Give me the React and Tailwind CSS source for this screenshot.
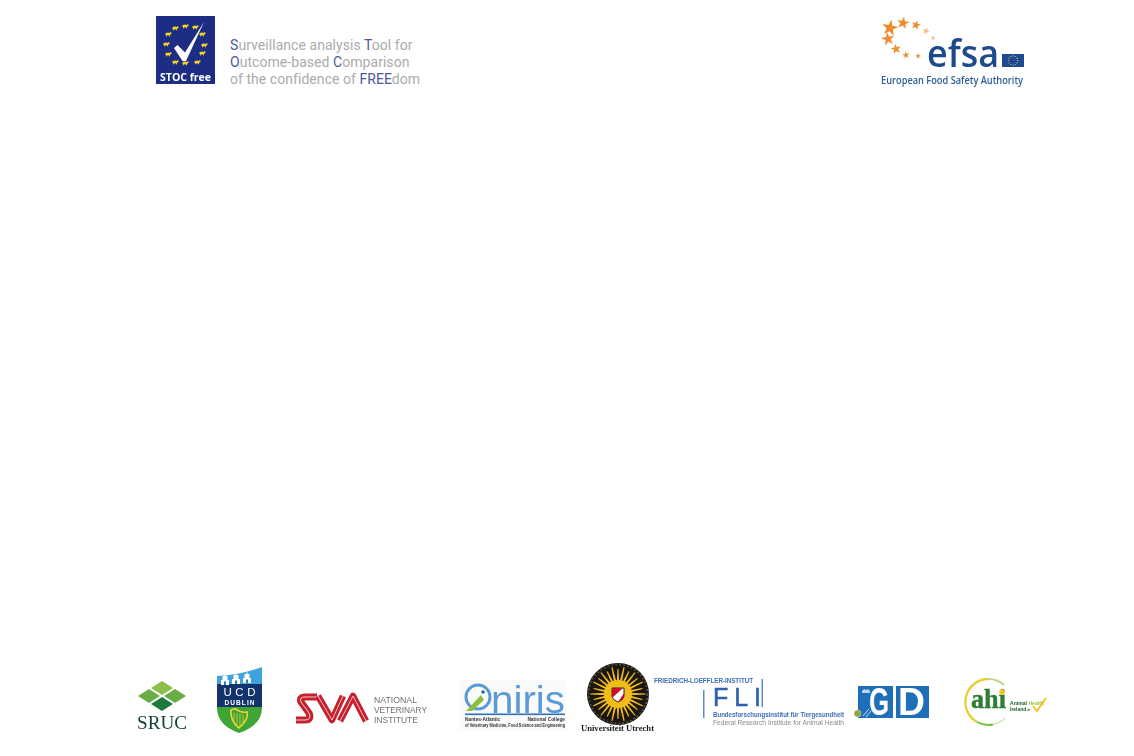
import React from "react";

const SANS = "'Open Sans', sans-serif";
const ARIAL = "'Liberation Sans', sans-serif";
const SERIF = "'Liberation Serif', serif";

function starPoints(cx, cy, r, rot = -90, inner = 0.4) {
  const pts = [];
  for (let i = 0; i < 10; i++) {
    const rad = i % 2 === 0 ? r : r * inner;
    const a = ((rot + i * 36) * Math.PI) / 180;
    pts.push(`${(cx + rad * Math.cos(a)).toFixed(2)},${(cy + rad * Math.sin(a)).toFixed(2)}`);
  }
  return pts.join(" ");
}

function StocFree() {
  const sheep = [[19,12],[29,10],[39,11],[46,18],[48,29],[46,37],[41,46],[29,47],[19,46],[12,38],[10,28],[12,18]];
  return (
    <svg width="59" height="68" viewBox="0 0 59 68" className="block shrink-0 overflow-visible blur-[0.3px]">
      <rect width="59" height="68" fill="#1c2d83" />
      {sheep.map(([x, y], i) => (
        <g key={i} fill="#f5d327">
          <ellipse cx={x} cy={y} rx="2.8" ry="1.5" />
          <rect x={x - 2} y={y} width="0.8" height="2.4" />
          <rect x={x + 1.2} y={y} width="0.8" height="2.4" />
          <circle cx={x + 2.7} cy={y - 0.8} r="0.9" />
        </g>
      ))}
      <polygon points="18,32 21.5,29 29,36.5 48,6 30,45 26.5,45" fill="#ffffff" />
      <text x="29.5" y="64.5" textAnchor="middle" fontFamily={SANS} fontWeight="700" fontSize="10.5" fill="#ffffff" textLength="51" lengthAdjust="spacingAndGlyphs">STOC free</text>
    </svg>
  );
}

function Efsa() {
  const stars = [[9,9,8.5,-80],[22,4,6.5,-80],[35,6,5,-75],[45,12,3.8,-70],[52,19,2.6,-70],[7,20,7,-100],[15,30,5.4,-100],[25,36,3.8,-100],[37,37,3,-100]];
  const ring = Array.from({ length: 12 }, (_, i) => {
    const a = (i * 30 * Math.PI) / 180;
    return [132 + 4.6 * Math.cos(a), 41.5 + 4.6 * Math.sin(a)];
  });
  return (
    <svg width="144" height="69" viewBox="0 0 144 69" className="block shrink-0 overflow-visible blur-[0.3px]">
      {stars.map(([x, y, r, rot], i) => (
        <polygon key={i} points={starPoints(x, y, r, rot)} fill={i < 3 ? "#ee8a2b" : i < 5 ? "#f3bd8c" : "#ee8f35"} />
      ))}
      <text x="46" y="48" fontFamily={SANS} fontWeight="600" fontSize="38" fill="#1d4a8c" textLength="72" lengthAdjust="spacingAndGlyphs">efsa</text>
      <rect x="121" y="35" width="22" height="13" fill="#1f4a92" />
      {ring.map(([x, y], i) => (
        <circle key={i} cx={x} cy={y} r="0.6" fill="#d8cf4a" />
      ))}
      <text x="0" y="65" fontFamily={SANS} fontWeight="600" fontSize="10" fill="#2e5c99" textLength="142" lengthAdjust="spacingAndGlyphs">European Food Safety Authority</text>
    </svg>
  );
}

function Sruc() {
  return (
    <svg width="50" height="50" viewBox="0 0 50 50" className="block shrink-0 overflow-visible ml-[137px] mt-[21px] blur-[0.3px]">
      <polygon points="25,0 36,7 25,14 14,7" fill="#8cbf4a" />
      <polygon points="12,8 23,15 12,22 1,15" fill="#6aad47" />
      <polygon points="38,8 49,15 38,22 27,15" fill="#6aad47" />
      <polygon points="25,16 36,23 25,30 14,23" fill="#1e7a3c" />
      <text x="0" y="48" fontFamily={SERIF} fontSize="19" fill="#12432f" textLength="50" lengthAdjust="spacingAndGlyphs">SRUC</text>
    </svg>
  );
}

function Ucd() {
  const shield = "M1 9 Q24 8 46 0 V41 Q46 58 23 66 Q1 58 1 41 Z";
  const towers = [[9, 9], [20, 8], [31, 7]];
  return (
    <svg width="47" height="67" viewBox="0 0 47 67" className="block shrink-0 overflow-visible ml-[29px] mt-[7px] blur-[0.3px]">
      <defs>
        <clipPath id="ucdShield"><path d={shield} /></clipPath>
      </defs>
      <g clipPath="url(#ucdShield)">
        <rect width="47" height="18" fill="#3ea3dc" />
        <rect y="17" width="47" height="23" fill="#14326b" />
        <rect y="40" width="47" height="27" fill="#3fa535" />
      </g>
      {towers.map(([x, y]) => (
        <g key={x} fill="#ffffff">
          <rect x={x - 4} y={y + 4} width="8" height="5" />
          <rect x={x - 2.5} y={y} width="5" height="4" />
          <polygon points={`${x - 1},${y} ${x},${y - 2} ${x + 1},${y}`} />
          <rect x={x - 1} y={y + 5.5} width="2" height="3.5" fill="#2a7ab8" />
        </g>
      ))}
      <text x="23.5" y="29" textAnchor="middle" fontFamily={ARIAL} fontSize="11.5" fill="#ffffff" textLength="32" lengthAdjust="spacing">UCD</text>
      <text x="23.5" y="38" textAnchor="middle" fontFamily={ARIAL} fontWeight="700" fontSize="6.5" fill="#ffffff" textLength="30" lengthAdjust="spacing">DUBLIN</text>
      <g fill="none" stroke="#f3d23c">
        <path d="M15 43 Q14 54 23 61 Q33 52 31 45 Q24 46 20 42 Q16 42 15 43 Z" strokeWidth="1.6" />
        <path d="M18 46 V55 M21 46 V58 M24 47 V59 M27 47 V56" strokeWidth="0.7" />
      </g>
    </svg>
  );
}

function Sva() {
  const s = "M22 4 H10 Q4 4 6 9 L14 20 Q17 27 10 27 H1";
  const v = "M23 3 L37 27 L48 3";
  const a = "M45 28 L58 3 L71 28";
  return (
    <svg width="132" height="32" viewBox="0 0 132 32" className="block shrink-0 overflow-visible ml-[32px] mt-[33px] blur-[0.3px]">
      <g fill="none" strokeLinejoin="round">
        <path d={s} stroke="#c4202e" strokeWidth="7" />
        <path d={s} stroke="#ffffff" strokeWidth="0.8" />
        <path d={v} stroke="#c4202e" strokeWidth="6.5" />
        <path d={v} stroke="#ffffff" strokeWidth="0.7" />
        <path d={a} stroke="#c4202e" strokeWidth="6.5" />
        <path d={a} stroke="#ffffff" strokeWidth="0.7" />
      </g>
      <g fontFamily={ARIAL} fontSize="9.5" fill="#6f7073">
        <text x="79" y="10" textLength="43" lengthAdjust="spacingAndGlyphs">NATIONAL</text>
        <text x="79" y="20" textLength="53" lengthAdjust="spacingAndGlyphs">VETERINARY</text>
        <text x="79" y="30" textLength="44" lengthAdjust="spacingAndGlyphs">INSTITUTE</text>
      </g>
    </svg>
  );
}

function Oniris() {
  return (
    <svg width="106" height="50" viewBox="0 0 106 50" className="block shrink-0 overflow-visible ml-[33px] mt-[20px] blur-[0.3px]">
      <rect width="106" height="50" fill="#fafafa" />
      <circle cx="18" cy="17" r="12" fill="none" stroke="#5b9bd5" strokeWidth="3" />
      <circle cx="23" cy="12" r="1.7" fill="#1f5fa8" />
      <polygon points="6,31 21,15 24,20 12,31" fill="#8dbf3f" />
      <text x="31" y="33" fontFamily={ARIAL} fontSize="38" fill="#5b9bd5" textLength="74" lengthAdjust="spacingAndGlyphs">niris</text>
      <rect x="5" y="33.5" width="100" height="1.6" fill="#2f6fb3" />
      <text x="5" y="40.5" fontFamily={ARIAL} fontWeight="700" fontSize="4.8" fill="#333333">Nantes-Atlantic</text>
      <text x="105" y="40.5" textAnchor="end" fontFamily={ARIAL} fontWeight="700" fontSize="4.8" fill="#333333">National College</text>
      <text x="5" y="46.5" fontFamily={ARIAL} fontWeight="700" fontSize="4.8" fill="#333333" textLength="100" lengthAdjust="spacingAndGlyphs">of Veterinary Medicine, Food Science and Engineering</text>
    </svg>
  );
}

function Utrecht() {
  const cx = 37;
  const cy = 34;
  const rays = Array.from({ length: 28 }, (_, i) => {
    const a = (i * (360 / 28) * Math.PI) / 180;
    const d = 0.11;
    const tip = 0.02;
    const out = i % 2 ? 25 : 27.5;
    const p = (r, t) => `${(cx + r * Math.cos(t)).toFixed(2)},${(cy + r * Math.sin(t)).toFixed(2)}`;
    return `${p(11, a - d)} ${p(out, a - tip)} ${p(out, a + tip)} ${p(11, a + d)}`;
  });
  return (
    <svg width="74" height="73" viewBox="0 0 74 73" className="block shrink-0 overflow-visible ml-[15px] blur-[0.3px]">
      <circle cx={cx} cy={cy} r="31" fill="#1a1712" />
      <circle cx={cx} cy={cy} r="14" fill="#f2bd1b" />
      {rays.map((r, i) => (
        <polygon key={i} points={r} fill="#f2bd1b" />
      ))}
      <circle cx={cx} cy={cy} r="29.5" fill="none" stroke="#4f4a3c" strokeWidth="2" strokeDasharray="2 2" />
      <path d="M31 28 H43 V36 Q43 40 37 42 Q31 40 31 36 Z" fill="#ffffff" stroke="#1a1712" strokeWidth="0.9" />
      <path d="M31 28 H42 L31 38 Z" fill="#c8102e" />
      <path d="M43 33 V36 Q43 40 37 42 Z" fill="#c8102e" />
      <text x="0" y="71" fontFamily={SERIF} fontWeight="700" fontSize="8.4" fill="#1a1a1a" textLength="73" lengthAdjust="spacingAndGlyphs">Universiteit Utrecht</text>
    </svg>
  );
}

function Fli() {
  return (
    <svg width="190" height="50" viewBox="0 0 190 50" className="block shrink-0 overflow-visible -ml-[1px] mt-[17px] blur-[0.3px]">
      <text x="0" y="6" fontFamily={ARIAL} fontWeight="700" fontSize="6.6" fill="#3b6fb4" textLength="99" lengthAdjust="spacingAndGlyphs">FRIEDRICH-LOEFFLER-INSTITUT</text>
      <rect x="107.5" y="2" width="1.5" height="28" fill="#5d8cc7" />
      <rect x="49" y="13" width="1.5" height="28" fill="#5d8cc7" />
      <text x="59" y="29" fontFamily={ARIAL} fontSize="25" fill="#2f62ad" stroke="#2f62ad" strokeWidth="0.5" textLength="48" lengthAdjust="spacing">FLI</text>
      <text x="59" y="40" fontFamily={ARIAL} fontWeight="700" fontSize="6.6" fill="#3b6fb4" textLength="131" lengthAdjust="spacingAndGlyphs">Bundesforschungsinstitut für Tiergesundheit</text>
      <text x="59" y="48" fontFamily={ARIAL} fontSize="6.4" fill="#8a8a8a" textLength="131" lengthAdjust="spacingAndGlyphs">Federal Research Institute for Animal Health</text>
    </svg>
  );
}

function Gd() {
  return (
    <svg width="76" height="36" viewBox="0 0 76 36" className="block shrink-0 overflow-visible ml-[10px] mt-[25px] blur-[0.3px]">
      <defs>
        <clipPath id="gdLeft"><rect x="4" y="1" width="35" height="32" /></clipPath>
        <clipPath id="gdRight"><rect x="42" y="1" width="33" height="32" /></clipPath>
      </defs>
      <rect x="4" y="1" width="35" height="32" fill="#1f6fb8" />
      <rect x="42" y="1" width="33" height="32" fill="#1f6fb8" />
      <g clipPath="url(#gdLeft)">
        <text x="15" y="30" fontFamily={ARIAL} fontWeight="700" fontSize="38" fill="#ffffff" textLength="20" lengthAdjust="spacingAndGlyphs">G</text>
      </g>
      <g clipPath="url(#gdRight)">
        <text x="44" y="30" fontFamily={ARIAL} fontWeight="700" fontSize="38" fill="#ffffff" textLength="27" lengthAdjust="spacingAndGlyphs">D</text>
      </g>
      <path d="M8 6 l2 -2 l2 1 l2 -1 l2 2 v2 h-8 z" fill="#b9d3ea" />
      <path d="M9 31 L15 24 M12 32 L17 26" stroke="#ffffff" strokeWidth="0.8" />
      <circle cx="3.5" cy="28.5" r="3.5" fill="#8fa53a" stroke="#e6e6e6" strokeWidth="0.5" />
    </svg>
  );
}

function Ahi() {
  return (
    <svg width="85" height="48" viewBox="0 0 85 48" className="block shrink-0 overflow-visible ml-[33px] mt-[18px] blur-[0.3px]">
      <path d="M14 44 A23 23 0 0 1 25 1" fill="none" stroke="#e9cf3b" strokeWidth="2.4" />
      <path d="M30 46.5 A23 23 0 0 1 14 44" fill="none" stroke="#7cbf45" strokeWidth="2" />
      <path d="M25 1 A23 23 0 0 1 41 7" fill="none" stroke="#bcd98f" strokeWidth="2" />
      <path d="M30 46.5 A23 23 0 0 0 42 40" fill="none" stroke="#cfe4b0" strokeWidth="1.5" />
      <text x="8" y="30" fontFamily={SERIF} fontWeight="700" fontSize="28" fill="#2e7d32" stroke="#2e7d32" strokeWidth="0.4" textLength="35" lengthAdjust="spacingAndGlyphs">ahi</text>
      <circle cx="39" cy="14" r="2.8" fill="#f2c81e" />
      <text x="47" y="27" fontFamily={ARIAL} fontWeight="700" fontSize="5" fill="#1e5e2a" textLength="34" lengthAdjust="spacingAndGlyphs">Animal <tspan fill="#9ac23c">Health</tspan></text>
      <text x="47" y="33" fontFamily={ARIAL} fontWeight="700" fontSize="5" fill="#1e5e2a">Ireland<tspan fontSize="3.5">.ie</tspan></text>
      <path d="M70 28 L74 33 L83 20" fill="none" stroke="#f0c419" strokeWidth="1.8" />
    </svg>
  );
}

export default function App() {
  return (
    <div className="flex h-screen w-full flex-col justify-between overflow-hidden bg-white">
      <header className="flex items-start justify-between pl-[156px] pr-[109px] pt-[16px]">
        <div className="flex items-start">
          <StocFree />
          <p className="ml-[15px] mt-[21px] font-['Roboto',sans-serif] text-[14px] leading-[17px] tracking-[0.05px] text-[#ababab]">
            <span className="text-[#4a5a9f]">S</span>urveillance analysis <span className="text-[#4a5a9f]">T</span>ool for
            <br />
            <span className="text-[#4a5a9f]">O</span>utcome-based <span className="text-[#4a5a9f]">C</span>omparison
            <br />
            of the confidence of <span className="text-[#4a5a9f]">FREE</span>dom
          </p>
        </div>
        <div className="mt-[3px]">
          <Efsa />
        </div>
      </header>
      <footer className="flex h-[96px] items-start">
        <Sruc />
        <Ucd />
        <Sva />
        <Oniris />
        <Utrecht />
        <Fli />
        <Gd />
        <Ahi />
      </footer>
    </div>
  );
}
